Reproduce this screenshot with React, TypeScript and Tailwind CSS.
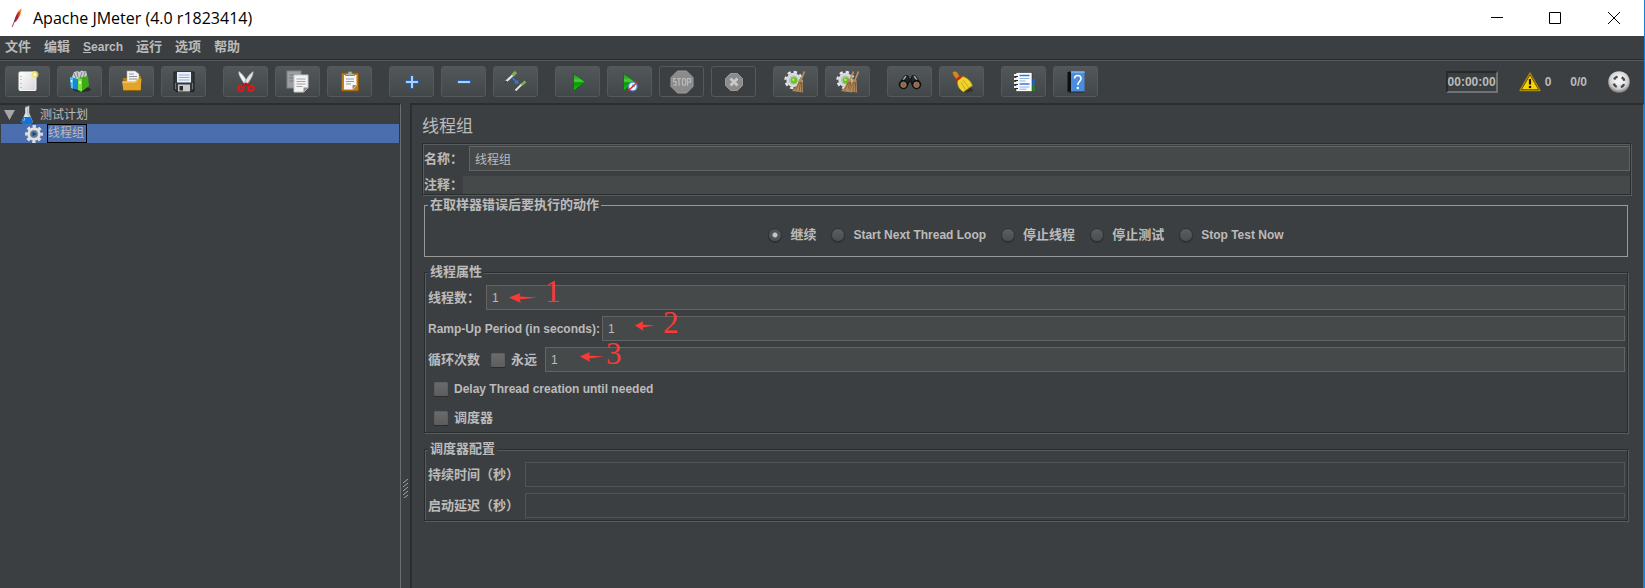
import React from "react";

const BLOCK_FONT = "font-['Liberation_Sans','Noto_Sans_CJK_SC',sans-serif]";
const ETCHED =
  "border border-[#2a2d2e] shadow-[1px_1px_0_#585c5e,inset_1px_1px_0_#585c5e]";
const INPUT =
  "block h-[25px] w-full min-w-0 border border-[#646464] bg-[#45494a] px-[5px] text-xs font-normal text-[#bbbbbb] outline-none";
const INPUT_DISABLED =
  "block h-[25px] w-full min-w-0 border border-[#525455] bg-[#3c3f41] px-[5px] text-xs outline-none";

/* ---------- icons ---------- */

function Svg({ children }: { children: React.ReactNode }) {
  return (
    <svg viewBox="0 0 24 24" className="h-6 w-6" aria-hidden="true">
      {children}
    </svg>
  );
}

function FeatherIcon() {
  return (
    <svg viewBox="0 0 12 20" className="h-5 w-3" aria-hidden="true">
      <defs>
        <linearGradient id="feather" x1="0" y1="1" x2="0.5" y2="0">
          <stop offset="0" stopColor="#8e2a6b" />
          <stop offset="0.5" stopColor="#d22128" />
          <stop offset="1" stopColor="#f69923" />
        </linearGradient>
      </defs>
      <path d="M10.500 0.500 C7 2 4.500 7 3 14.500 L5 13.500 C8 9.500 10.800 5 10.500 0.500Z" fill="url(#feather)" />
      <path d="M8.500 4 C5.500 8 3.500 13 1.200 19" stroke="#6d2050" strokeWidth="0.8" fill="none" />
    </svg>
  );
}

const NewIcon = () => (
  <Svg>
    <defs>
      <linearGradient id="paper" x1="0" y1="0" x2="1" y2="1">
        <stop offset="0" stopColor="#ffffff" />
        <stop offset="1" stopColor="#d6d6d6" />
      </linearGradient>
    </defs>
    <rect x="3" y="2" width="17" height="18.500" rx="1" fill="url(#paper)" stroke="#f5f5f5" />
    <path d="M5 6v1M5 9v1M5 13v1M5 17v1" stroke="#999" />
    <circle cx="19" cy="4.500" r="3.500" fill="#f4e35c" opacity="0.75" />
    <circle cx="19" cy="4.500" r="1.500" fill="#fffbd0" />
  </Svg>
);

const TemplatesIcon = () => (
  <Svg>
    <ellipse cx="14" cy="19.500" rx="9" ry="2.500" fill="#2a2c2d" />
    <path d="M4 7l2-5 4-1 1 1 3-1.500 2 1 2-.5 1 4-2 7H5z" fill="#c9cfd0" />
    <path d="M6 3l2 5M9 2l1 5M14 2l-2 6M17 2l-2 6" stroke="#7d8688" />
    <path d="M2 7l8 2v11l-7-2z" fill="#158ad3" />
    <path d="M2 7l3 .8v10.700L3 18z" fill="#58c0f2" />
    <path d="M10 8l10-2 1 10-8 6-3-2z" fill="#3caa12" />
    <path d="M10 8l4 1v12.500L10 20z" fill="#7be23f" />
    <path d="M3.500 10v2M12 11v3" stroke="#fff" strokeWidth="1.500" />
  </Svg>
);

const OpenIcon = () => (
  <Svg>
    <path d="M3 8h5l1-2h12v14H3z" fill="#b97708" />
    <path d="M7 1h8l4 3v9H7z" fill="#f5f5f5" stroke="#a8a8a8" strokeWidth=".6" />
    <path d="M9 4h5M9 6.500h8M9 9h8" stroke="#8d9194" />
    <path d="M2 11.500h13l3-3h3.500L20.500 20.500H3.500z" fill="#e2a52c" />
    <path d="M2.500 12h13l3-3" stroke="#fbd77d" fill="none" />
    <path d="M3.500 20.500h17" stroke="#96600a" />
  </Svg>
);

const SaveIcon = () => (
  <Svg>
    <path d="M2 2h20v19.500H4l-2-2z" fill="#35383b" stroke="#1c1e20" />
    <rect x="5" y="2" width="14" height="10.500" fill="#e9f2fb" />
    <path d="M6.500 5h11M6.500 7.500h11M6.500 10h11" stroke="#8db5dc" />
    <rect x="6" y="14.500" width="12" height="7" fill="#c9cccd" />
    <rect x="7.500" y="16" width="3.500" height="4.500" fill="#27292b" />
    <path d="M3.500 13v6M20.500 13v6" stroke="#707579" />
  </Svg>
);

const CutIcon = () => (
  <Svg>
    <path d="M5 1.500c-1.200 2.500 2.500 8.500 6 13l2.500-2C11.500 8 8.500 4 5 1.500z" fill="#f2f3f3" stroke="#a2a6a8" strokeWidth=".6" />
    <path d="M19 1.500c1.200 2.500-2.500 8.500-6 13l-2.500-2C12.500 8 15.500 4 19 1.500z" fill="#dfe2e3" stroke="#909597" strokeWidth=".6" />
    <ellipse cx="7" cy="18.300" rx="2.700" ry="2.500" fill="none" stroke="#e01818" strokeWidth="2.200" />
    <ellipse cx="17" cy="18.300" rx="2.700" ry="2.500" fill="none" stroke="#e01818" strokeWidth="2.200" />
    <path d="M8.500 16l3.500-2.500 3.500 2.500" stroke="#c41010" strokeWidth="2" fill="none" />
  </Svg>
);

const CopyIcon = () => (
  <Svg>
    <rect x="1" y="1" width="14" height="17" fill="#9b9fa1" stroke="#7e8284" />
    <path d="M3.500 5h10M3.500 8h10M3.500 11h10" stroke="#73787a" />
    <path d="M8 5h14v13l-4 4H8z" fill="#f3f3f3" stroke="#c6c6c6" />
    <path d="M10.500 9h9M10.500 11.500h9M10.500 14h9M10.500 16.500h6" stroke="#a3a3a3" />
    <path d="M22.500 17.500l-5 5v-5z" fill="#8d8d8d" />
  </Svg>
);

const PasteIcon = () => (
  <Svg>
    <rect x="3.500" y="3" width="17" height="18" rx="1" fill="#c07d1c" stroke="#8a5407" />
    <path d="M6 5h12.500v10.500L15 19.500H6z" fill="#f6f6f6" />
    <path d="M8 9h8M8 11.500h8M8 14h5" stroke="#999" />
    <path d="M18.500 15l-4 4.500V15z" fill="#8f8f8f" />
    <path d="M7.500 5.500V3.500h2.500V1.500h4v2h2.500v2z" fill="#aeb1a5" stroke="#64675d" strokeWidth=".7" />
  </Svg>
);

const PlusIcon = () => (
  <Svg>
    <path d="M12 5v14M5 12h14" stroke="#2a61a8" strokeWidth="4" />
    <path d="M12 6v12M6 12h12" stroke="#a9d0fb" strokeWidth="2" />
  </Svg>
);

const MinusIcon = () => (
  <Svg>
    <path d="M5 12h14" stroke="#2a61a8" strokeWidth="4" />
    <path d="M6 12h12" stroke="#a9d0fb" strokeWidth="2" />
  </Svg>
);

const ToggleIcon = () => (
  <Svg>
    <path d="M2 11.500L9 5" stroke="#e4e6e2" strokeWidth="2.200" />
    <path d="M8.500 5.500L12 2" stroke="#7fb04a" strokeWidth="3.200" />
    <path d="M1 12.500l2-1.500" stroke="#222" strokeWidth="1" />
    <path d="M11.500 20.500L18 14" stroke="#e4e6e2" strokeWidth="1.800" />
    <path d="M17.500 15L21.500 11.500" stroke="#7fb04a" strokeWidth="2.600" />
    <path d="M8.500 8l4 4" stroke="#2f7be0" strokeWidth="1.400" />
    <path d="M14.500 14l-4.500-.8 4-3.700z" fill="#2f7be0" />
  </Svg>
);

const PlayIcon = () => (
  <Svg>
    <defs>
      <linearGradient id="play" x1="0" y1="0" x2="0" y2="1">
        <stop offset="0" stopColor="#1f7a1f" />
        <stop offset="0.45" stopColor="#4ccf3e" />
        <stop offset="0.55" stopColor="#089808" />
        <stop offset="1" stopColor="#12c912" />
      </linearGradient>
    </defs>
    <path d="M7.500 3v18L19 12z" fill="url(#play)" stroke="#0b6d0b" strokeWidth=".8" />
  </Svg>
);

const PlayNoTimerIcon = () => (
  <Svg>
    <path d="M5.500 3v18L17 12z" fill="url(#play)" stroke="#0b6d0b" strokeWidth=".8" />
    <circle cx="14.800" cy="16.500" r="4.300" fill="#f0f5fb" stroke="#5c8ec4" strokeWidth="1.300" />
    <path d="M14.800 14v2.500h2" stroke="#5c8ec4" fill="none" strokeWidth=".8" />
    <path d="M10 21l9.500-9" stroke="#e02626" strokeWidth="1.400" />
  </Svg>
);

const StopIcon = () => (
  <Svg>
    <path d="M7.500 1h9L23 7.500v9L16.500 23h-9L1 16.500v-9z" fill="#8b8b8b" stroke="#9b9b9b" />
    <g stroke="#b7b7b7" strokeWidth="1.300" fill="none">
      <path d="M6 8.700H3.600v3H6v3.500H3.300" />
      <path d="M7 8.700h4M9 8.700v7" />
      <rect x="12.400" y="8.700" width="3.200" height="6.500" rx="1" />
      <path d="M17.500 15.700v-7H20.500v3.500h-3" />
    </g>
  </Svg>
);

const ShutdownIcon = () => (
  <Svg>
    <path d="M8.500 3.500h7L20.500 8.500v7l-5 5h-7l-5-5v-7z" fill="#8b8b8b" stroke="#999" />
    <path d="M8.500 8.500l7 7M15.500 8.500l-7 7" stroke="#c9c9c9" strokeWidth="2.800" />
  </Svg>
);

const GearShape = () => (
  <>
    <circle cx="9.500" cy="10" r="8" fill="none" stroke="#e6e8e9" strokeWidth="2.400" strokeDasharray="3.300 2.983" />
    <circle cx="9.500" cy="10" r="7.200" fill="#d8dbdc" />
    <circle cx="9.500" cy="10" r="4.600" fill="#b9bec0" />
    <circle cx="10" cy="10.500" r="3.200" fill="#6cc41f" />
    <circle cx="9.300" cy="9.700" r="1.200" fill="#a9ea6a" />
  </>
);

const Broom = ({ x }: { x: number }) => (
  <g transform={`translate(${x} 0)`}>
    <path d="M20.500 1.500L17 10" stroke="#b98d55" strokeWidth="1.800" />
    <path d="M15 9l3.500 1 .5 12.500-11-1.500c3.500-2.500 6-7 7-12z" fill="#b58a59" />
    <path d="M15.500 12l-4 8.500M16.500 12l-1.500 9.500M17.500 12v10" stroke="#7a5833" strokeWidth=".8" />
  </g>
);

const ClearIcon = () => (
  <Svg>
    <GearShape />
    <Broom x={0} />
  </Svg>
);

const ClearAllIcon = () => (
  <Svg>
    <GearShape />
    <Broom x={-3} />
    <Broom x={2} />
  </Svg>
);

const SearchIcon = () => (
  <Svg>
    <path d="M3 11L7 5.500l3 .5 1 4-1 5zM21 11L17 5.500 14 6l-1 4 1 5z" fill="#26282a" stroke="#111" />
    <path d="M5 10l3-4M19 10l-3-4" stroke="#a9adaf" strokeWidth="1.300" />
    <path d="M10 8.500h4v4h-4z" fill="#1a1b1c" />
    <circle cx="5.500" cy="14.500" r="4.300" fill="#18191a" stroke="#0d0d0d" />
    <circle cx="18.500" cy="14.500" r="4.300" fill="#18191a" stroke="#0d0d0d" />
    <circle cx="5.500" cy="14.800" r="2.700" fill="#a3623a" stroke="#8f9395" strokeWidth=".7" />
    <circle cx="18.500" cy="14.800" r="2.700" fill="#a3623a" stroke="#8f9395" strokeWidth=".7" />
  </Svg>
);

const ResetSearchIcon = () => (
  <Svg>
    <ellipse cx="16" cy="20" rx="7" ry="2.500" fill="#303334" />
    <path d="M2.500 3c0-2 4-2.500 5-.5l3 5-4 2.500C5 7 2.500 5 2.500 3z" fill="#c98a2b" stroke="#7b4e10" strokeWidth=".7" />
    <path d="M7.500 10.500l5-4c5 1 8.500 5 10 9l-9 6.500c-4-2-6.500-6-6-11.500z" fill="#f1d32e" stroke="#a68505" strokeWidth=".7" />
    <path d="M11 12l4.500 8M13 10l6 8" stroke="#c5a20c" strokeWidth=".9" />
    <path d="M6 10.500l5.500-4.500" stroke="#d42020" strokeWidth="2.600" />
  </Svg>
);

const FunctionHelperIcon = () => (
  <Svg>
    <rect x="19" y="9" width="3.500" height="6" fill="#1a63d8" />
    <rect x="19" y="15" width="3.500" height="6" fill="#149414" />
    <rect x="4" y="2.500" width="16" height="19" fill="#fdfdfd" stroke="#333" strokeWidth=".6" />
    <path d="M7.500 5.500h10M7.500 14h10" stroke="#3779d2" strokeWidth="1.300" />
    <path d="M7.500 8.500h10M7.500 11h6M7.500 17h10M7.500 19.200h7" stroke="#6f9fe0" strokeWidth=".8" />
    <path d="M2 5h4M2 9h4M2 13h4M2 17h4" stroke="#f1f1f1" strokeWidth="1.800" />
    <path d="M3 6.500h3M3 10.500h3M3 14.500h3M3 18.500h3" stroke="#222" strokeWidth="1" />
  </Svg>
);

const HelpIcon = () => (
  <Svg>
    <path d="M3.500 2L7 1.500v21l-3.500-1z" fill="#0e0f10" />
    <rect x="7" y="1.500" width="13.500" height="20.500" fill="#4a8de0" />
    <path d="M7 2h13.500" stroke="#a9cdf6" />
    <path d="M3.500 22h17" stroke="#1c2733" strokeWidth="1" />
    <path d="M10.500 8.500c0-4 6.500-4 6.500 0 0 3-3.200 3-3.200 6.500" stroke="#fff" strokeWidth="1.600" fill="none" />
    <circle cx="13.800" cy="18" r="1.200" fill="#fff" />
  </Svg>
);

const WarningIcon = () => (
  <svg viewBox="0 0 22 20" className="h-5 w-[22px]" aria-hidden="true">
    <path d="M11 1L21 18.500H1z" fill="#3a3204" stroke="#a58a0a" strokeWidth="1.400" strokeLinejoin="round" />
    <path d="M11 3.600L19 17.300H3z" fill="#f9d20d" />
    <path d="M11 7v5.500" stroke="#1c1a0a" strokeWidth="2.200" />
    <circle cx="11" cy="15" r="1.300" fill="#1c1a0a" />
  </svg>
);

const TargetIcon = () => (
  <svg viewBox="0 0 22 22" className="h-[22px] w-[22px]" aria-hidden="true">
    <defs>
      <radialGradient id="ball" cx="0.5" cy="0.4" r="0.6">
        <stop offset="0.3" stopColor="#f2f2f2" />
        <stop offset="0.7" stopColor="#cfcfcf" />
        <stop offset="1" stopColor="#757575" />
      </radialGradient>
    </defs>
    <circle cx="11" cy="11" r="10.800" fill="url(#ball)" />
    <circle cx="11" cy="11" r="5.500" fill="none" stroke="#4a4a4a" strokeWidth="2.400" strokeDasharray="4.300 4.340" strokeDashoffset="-2.170" />
  </svg>
);

const FlaskIcon = () => (
  <svg viewBox="0 0 12 19" className="h-[19px] w-3" aria-hidden="true">
    <path d="M4.200 2.500L8.200 1v7L11.500 16c.4 1.400-.3 2.200-1.300 2.200H2C1 18.200.3 17.400.7 16L4.200 8z" fill="#d5e2eb" />
    <path d="M2.500 12h7l2 4.200c.3 1.200-.3 2-1.300 2H2c-1 0-1.600-.8-1.300-2z" fill="#1273d6" />
    <path d="M3.800 13L2.800 16" stroke="#8ec6ff" />
    <path d="M4 2.500L8.500 .800" stroke="#8d9aa3" strokeWidth="1.200" />
    <path d="M6.800 3v6l1.800 3" stroke="#8697a4" strokeWidth=".7" fill="none" />
  </svg>
);

const ThreadGroupIcon = () => (
  <svg viewBox="0 0 18 18" className="h-[18px] w-[18px]" aria-hidden="true">
    <circle cx="9" cy="9" r="7.600" fill="none" stroke="#e2e2e2" strokeWidth="2.600" strokeDasharray="3.300 2.669" strokeDashoffset="1.650" />
    <circle cx="9" cy="9" r="5.300" fill="#7592bb" stroke="#e2e2e2" strokeWidth="3" />
    <circle cx="9" cy="9" r="3.800" fill="#55779f" stroke="#9aa4b0" strokeWidth=".6" />
    <path d="M7.700 6.800v4.400l3.600-2.200z" fill="#22406c" />
  </svg>
);

/* ---------- toolbar ---------- */

type Tool = { label: string; icon: React.ReactNode; disabled?: boolean };

const TOOL_GROUPS: Tool[][] = [
  [
    { label: "新建", icon: <NewIcon /> },
    { label: "模板", icon: <TemplatesIcon /> },
    { label: "打开", icon: <OpenIcon /> },
    { label: "保存", icon: <SaveIcon /> },
  ],
  [
    { label: "剪切", icon: <CutIcon /> },
    { label: "复制", icon: <CopyIcon /> },
    { label: "粘贴", icon: <PasteIcon /> },
  ],
  [
    { label: "全部展开", icon: <PlusIcon /> },
    { label: "全部折叠", icon: <MinusIcon /> },
    { label: "切换", icon: <ToggleIcon /> },
  ],
  [
    { label: "启动", icon: <PlayIcon /> },
    { label: "不停顿启动", icon: <PlayNoTimerIcon /> },
    { label: "停止", icon: <StopIcon />, disabled: true },
    { label: "关闭", icon: <ShutdownIcon />, disabled: true },
  ],
  [
    { label: "清除", icon: <ClearIcon /> },
    { label: "清除全部", icon: <ClearAllIcon /> },
  ],
  [
    { label: "查找", icon: <SearchIcon /> },
    { label: "重置查找", icon: <ResetSearchIcon /> },
  ],
  [
    { label: "函数助手", icon: <FunctionHelperIcon /> },
    { label: "帮助", icon: <HelpIcon /> },
  ],
];

function ToolButton({ label, icon, disabled }: Tool) {
  return (
    <button
      type="button"
      aria-label={label}
      disabled={disabled}
      className="flex h-[31px] w-[45px] items-center justify-center rounded-[3px] border border-[#55595b] bg-linear-to-b from-[#52575a] to-[#42474a] disabled:bg-none"
    >
      {icon}
    </button>
  );
}

/* ---------- form parts ---------- */

function Radio({ label, checked }: { label: string; checked?: boolean }) {
  return (
    <label className="flex items-center gap-2">
      <input
        type="radio"
        name="on-error"
        defaultChecked={checked}
        className="h-[14px] w-[14px] appearance-none rounded-full border border-[#2f3233] bg-linear-to-b from-[#5a5e60] to-[#4a4e50] shadow-[0_1px_0_#2b2d2e] checked:bg-[radial-gradient(circle,#c4c4c4_0,#c4c4c4_2px,#4f5355_3px)]"
      />
      {label}
    </label>
  );
}

const CHECKBOX =
  "h-[14px] w-[14px] shrink-0 appearance-none rounded-[1px] border border-[#5c5f60] bg-linear-to-b from-[#6a6a6a] to-[#5e5e5e] shadow-[0_1px_0_#292b2c]";

type MarkProps = { digit: string; className: string; arrowClassName: string };

function Mark({ digit, className, arrowClassName }: MarkProps) {
  return (
    <div className={`pointer-events-none absolute -top-[9px] flex items-start text-[#fb3a37] ${className}`}>
      <svg viewBox="0 0 28 10" preserveAspectRatio="none" className={`h-[10px] ${arrowClassName}`} aria-hidden="true">
        <path d="M0 4.500L11.500 0 10.500 3.400 28 4.500 10.500 6.500 12 10z" fill="currentColor" />
      </svg>
      <span className="font-['Liberation_Serif',serif] text-[31px] leading-8 font-normal">{digit}</span>
    </div>
  );
}

function Group({ title, className, children }: { title: string; className: string; children: React.ReactNode }) {
  return (
    <fieldset className={`mr-[3px] ml-[2px] min-w-0 ${className}`}>
      <legend className="ml-[3px] bg-[#3c3f41] px-[2px] leading-4">{title}</legend>
      {children}
    </fieldset>
  );
}

export default function App() {
  return (
    <div
      className={`flex min-h-screen flex-col border-r border-[#1883d7] bg-[#3c3f41] text-[13px] font-bold text-[#bbbbbb] ${BLOCK_FONT}`}
    >
      <header className="flex h-9 items-center bg-white pl-[11px] text-black">
        <FeatherIcon />
        <h1 className="ml-[10px] flex-1 font-['Open_Sans',sans-serif] text-base font-normal">
          Apache JMeter (4.0 r1823414)
        </h1>
        <button type="button" aria-label="最小化" className="flex h-9 w-[58px] items-center justify-center">
          <svg viewBox="0 0 12 12" className="h-3 w-3" stroke="#000">
            <path d="M0 5.500h12" />
          </svg>
        </button>
        <button type="button" aria-label="最大化" className="flex h-9 w-[58px] items-center justify-center">
          <svg viewBox="0 0 12 12" className="h-3 w-3" stroke="#000" fill="none">
            <path d="M.5 .5h11v11H.5z" />
          </svg>
        </button>
        <button type="button" aria-label="关闭窗口" className="flex h-9 w-[60px] items-center justify-center">
          <svg viewBox="0 0 12 12" className="h-3 w-3" stroke="#000">
            <path d="M0 0l12 12M12 0L0 12" />
          </svg>
        </button>
      </header>

      <nav className="flex h-6 items-center gap-[13px] border-b border-[#282a2b] pb-px pl-[5px]">
        <button type="button">文件</button>
        <button type="button">编辑</button>
        <button type="button" className="text-xs">
          <span className="underline">S</span>earch
        </button>
        <button type="button">运行</button>
        <button type="button">选项</button>
        <button type="button">帮助</button>
      </nav>

      <div className="flex h-[43px] items-center gap-[17px] border-t border-[#55595b] pr-[14px] pb-px pl-[5px] text-xs">
        {TOOL_GROUPS.map((group, i) => (
          <div key={i} className="flex gap-[7px]">
            {group.map((tool) => (
              <ToolButton key={tool.label} {...tool} />
            ))}
          </div>
        ))}
        <div className="ml-auto flex items-center">
          <output className="border-2 border-t-[#27292a] border-r-[#6f7375] border-b-[#6f7375] border-l-[#27292a] leading-[18px]">
            00:00:00
          </output>
          <div className="ml-[21px] flex items-center gap-1">
            <WarningIcon />
            <span>0</span>
          </div>
          <span className="mr-[21px] ml-[19px]">0/0</span>
          <TargetIcon />
        </div>
      </div>

      <main className="flex flex-1">
        <aside className="w-[401px] shrink-0 border-t-2 border-r border-t-[#2b2d2e] border-r-[#6a6e70] pl-px text-xs font-normal">
          <ul className="border-r border-[#323536]">
            <li className="flex h-[19px] items-center">
              <svg viewBox="0 0 11 10" className="ml-[3px] h-[10px] w-[11px]" aria-hidden="true">
                <path d="M0 0h11L5.500 10z" fill="#a6a6a6" />
              </svg>
              <span className="mr-[7px] ml-[6px]">
                <FlaskIcon />
              </span>
              测试计划
            </li>
            <li className="flex h-[19px] items-center bg-[#4b6eaf] pl-6">
              <ThreadGroupIcon />
              <span className="ml-1 border border-black pr-[2px] leading-[17px]">线程组</span>
            </li>
          </ul>
        </aside>

        <div className="flex w-[9px] shrink-0 justify-center pt-[376px]">
          <svg viewBox="0 0 5 19" className="h-[19px] w-[5px]" stroke="#a2a4a5" aria-hidden="true">
            <path d="M0 4L5 0M0 8L5 4M0 12L5 8M0 16L5 12M1 19L5 16" />
          </svg>
        </div>

        <section className="min-w-0 flex-1 border-t-2 border-r border-l-2 border-t-[#2b2d2e] border-r-[#6a6e70] border-l-[#2b2d2e] pr-[12px] pl-[10px]">
          <h2 className="pt-[10px] pb-1 text-[17px] leading-6 font-normal">线程组</h2>

          <div className={`flex flex-col gap-[5px] pt-[2px] pl-px ${ETCHED}`}>
            <div className="flex items-center gap-[6px]">
              <label htmlFor="name" className="shrink-0">名称：</label>
              <input id="name" defaultValue="线程组" className={INPUT} />
            </div>
            <div className="flex items-center">
              <label htmlFor="comment" className="shrink-0 leading-[18px]">注释：</label>
              <input id="comment" className="h-[18px] w-full min-w-0 bg-[#45494a] px-[5px] text-xs font-normal outline-none" />
            </div>
          </div>

          <Group title="在取样器错误后要执行的动作" className="mt-[2px] h-[60px] border border-[#999999]">
            <div className="flex justify-center gap-[15px] pt-3 leading-5">
              <Radio label="继续" checked />
              <span className="text-xs leading-5">
                <Radio label="Start Next Thread Loop" />
              </span>
              <Radio label="停止线程" />
              <Radio label="停止测试" />
              <span className="text-xs leading-5">
                <Radio label="Stop Test Now" />
              </span>
            </div>
          </Group>

          <Group title="线程属性" className={`mt-[7px] ${ETCHED}`}>
            <div className="flex flex-col gap-[6px] pt-[5px] pr-[2px] pl-[3px]">
              <div className="flex items-center gap-[6px]">
                <label htmlFor="threads" className="shrink-0">线程数：</label>
                <div className="relative flex-1">
                  <input id="threads" defaultValue="1" className={INPUT} />
                  <Mark digit="1" className="left-[23px] gap-2" arrowClassName="mt-[17px] w-7" />
                </div>
              </div>
              <div className="flex items-center gap-[2px]">
                <label htmlFor="ramp" className="shrink-0 text-xs">Ramp-Up Period (in seconds):</label>
                <div className="relative flex-1">
                  <input id="ramp" defaultValue="1" className={INPUT} />
                  <Mark digit="2" className="left-[33px] gap-2" arrowClassName="mt-[14px] w-5" />
                </div>
              </div>
              <div className="flex items-center">
                <label htmlFor="loops" className="shrink-0">循环次数</label>
                <label className="mr-2 ml-[11px] flex shrink-0 items-center gap-[6px]">
                  <input type="checkbox" className={CHECKBOX} />
                  永远
                </label>
                <div className="relative flex-1">
                  <input id="loops" defaultValue="1" className={INPUT} />
                  <Mark digit="3" className="left-[35px] gap-[2px]" arrowClassName="mt-[14px] w-6" />
                </div>
              </div>
            </div>
            <div className="flex flex-col items-start pt-[2px] pl-[9px]">
              <label className="flex h-[29px] items-center gap-[6px] text-xs">
                <input type="checkbox" className={CHECKBOX} />
                Delay Thread creation until needed
              </label>
              <label className="flex h-[29px] items-center gap-[6px]">
                <input type="checkbox" className={CHECKBOX} />
                调度器
              </label>
            </div>
          </Group>

          <Group title="调度器配置" className={`mt-2 ${ETCHED}`}>
            <div className="flex flex-col gap-[6px] pt-[5px] pr-[2px] pb-[2px] pl-[3px]">
              <div className="flex items-center gap-[6px]">
                <label htmlFor="duration" className="shrink-0">持续时间（秒）</label>
                <input id="duration" disabled className={INPUT_DISABLED} />
              </div>
              <div className="flex items-center gap-[6px]">
                <label htmlFor="delay" className="shrink-0">启动延迟（秒）</label>
                <input id="delay" disabled className={INPUT_DISABLED} />
              </div>
            </div>
          </Group>
        </section>
      </main>
    </div>
  );
}
